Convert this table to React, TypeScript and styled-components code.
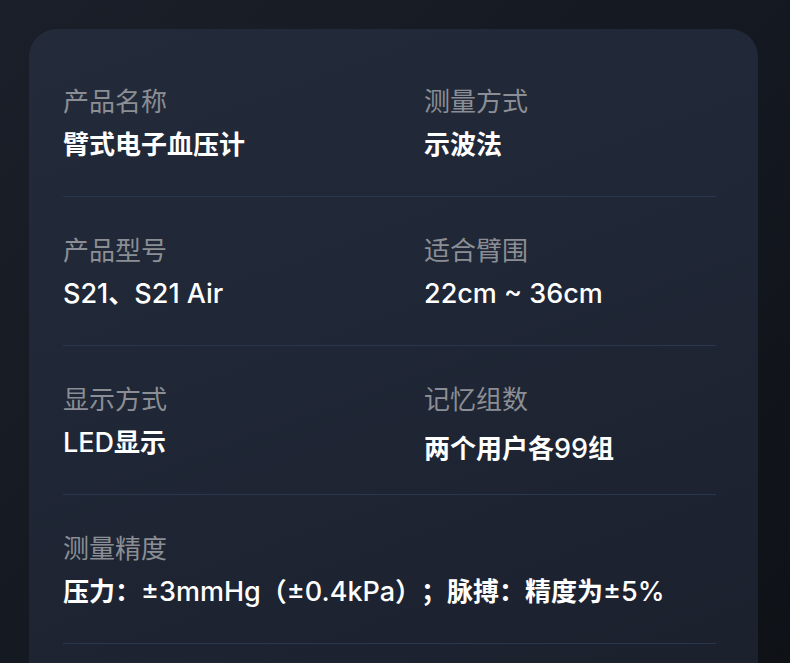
import styled, { createGlobalStyle } from "styled-components";

const GlobalStyle = createGlobalStyle`
  html, body {
    margin: 0;
    padding: 0;
    background: #12161d;
  }
  body {
    font-family: "Noto Sans CJK SC", "Noto Sans", sans-serif;
  }
`;

type Spec = { label: string; value: string; shift?: number };

const rows: Spec[][] = [
  [
    { label: "产品名称", value: "臂式电子血压计" },
    { label: "测量方式", value: "示波法" },
  ],
  [
    { label: "产品型号", value: "S21、S21 Air" },
    { label: "适合臂围", value: "22cm ~ 36cm" },
  ],
  [
    { label: "显示方式", value: "LED显示" },
    { label: "记忆组数", value: "两个用户各99组", shift: 6 },
  ],
  [{ label: "测量精度", value: "压力：±3mmHg（±0.4kPa）；脉搏：精度为±5%" }],
];

// split a value into latin and CJK runs so each can take its own face
function runs(text: string) {
  return text.match(/[A-Za-z0-9±%.~ ]+|[^A-Za-z0-9±%.~ ]+/g) ?? [];
}

export default function App() {
  return (
    <>
      <GlobalStyle />
      <Page>
        <Card>
          {rows.map((row, i) => (
            <Row key={i} $single={row.length === 1}>
              {row.map((item) => (
                <Cell key={item.label}>
                  <Label>{item.label}</Label>
                  <Value $shift={item.shift ?? 0}>
                    {runs(item.value).map((part, j) =>
                      /[A-Za-z0-9]/.test(part) ? <Latin key={j}>{part}</Latin> : <span key={j}>{part}</span>
                    )}
                  </Value>
                </Cell>
              ))}
            </Row>
          ))}
        </Card>
      </Page>
    </>
  );
}

const Page = styled.main`
  min-height: 663px;
  box-sizing: border-box;
  padding: 29px 32px 0 29px;
  background: linear-gradient(135deg, #1a1f29 0%, #141820 55%, #0e1116 100%);
  overflow: hidden;
`;

const Card = styled.section`
  box-sizing: border-box;
  min-height: 660px;
  padding: 19px 42px 0 34px;
  border-radius: 28px;
  background: linear-gradient(160deg, #232b3a 0%, #1f2635 50%, #1b202c 100%);
`;

const Row = styled.div<{ $single: boolean }>`
  display: grid;
  grid-template-columns: ${({ $single }) => ($single ? "1fr" : "361px 1fr")};
  padding: 36px 0 37px;
  border-bottom: 1px solid #283650;
`;

const Cell = styled.div`
  display: flex;
  flex-direction: column;
  gap: 11px;
  min-width: 0;
`;

const Label = styled.div`
  height: 32px;
  color: #8b8e94;
  font-size: 26px;
  line-height: 32px;
  font-weight: 400;
  white-space: nowrap;
`;

const Value = styled.div<{ $shift: number }>`
  height: 32px;
  color: #ffffff;
  font-size: 26px;
  line-height: 32px;
  font-weight: 700;
  white-space: nowrap;
  text-spacing-trim: space-all;
  transform: translateY(${({ $shift }) => $shift}px);
`;

const Latin = styled.span`
  font-family: "Inter", "Noto Sans", sans-serif;
  font-size: 27px;
  font-weight: 500;
  line-height: 1;
`;
